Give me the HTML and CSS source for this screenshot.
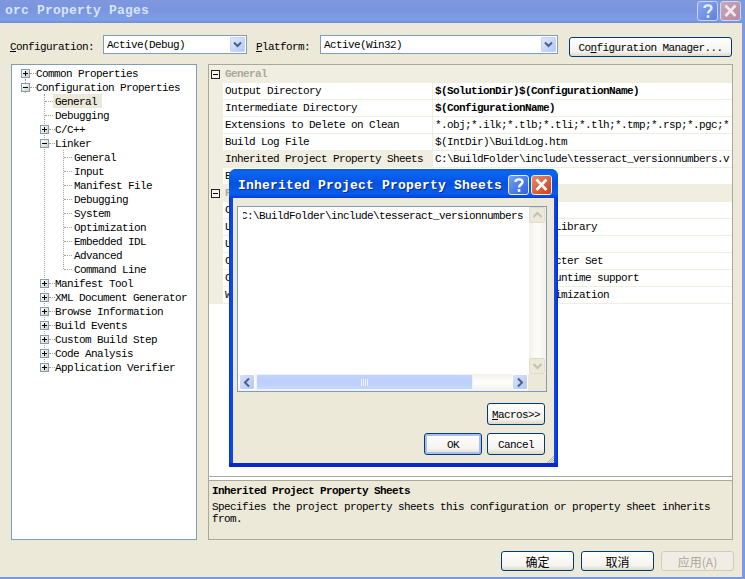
FILE: index.html
```html
<!DOCTYPE html>
<html>
<head>
<meta charset="utf-8">
<title>orc Property Pages</title>
<link rel="stylesheet" href="styles.css">
</head>
<body>
<div class="window">
  <div class="titlebar">
    <span class="title-text">orc Property Pages</span>
    <span class="cap cap-help inactive"><svg width="20" height="20" viewBox="0 0 20 20"><path d="M6.5 7 C6.5 3.5 13.5 3.5 13.5 7 C13.5 9.5 10 9.5 10 12.5" fill="none" stroke="#e8effc" stroke-width="2.4"/><rect x="8.7" y="14.2" width="2.6" height="2.6" fill="#e8effc"/></svg></span>
    <span class="cap cap-close inactive"><svg width="21" height="20" viewBox="0 0 21 20"><path d="M5.5 4.5 L15.5 15 M15.5 4.5 L5.5 15" stroke="#f3e8e8" stroke-width="2.6"/></svg></span>
  </div>

  <div class="config-row">
    <label class="field-label label-config"><u>C</u>onfiguration:</label>
    <div class="combo combo-config"><span>Active(Debug)</span><span class="combo-btn"><svg width="9" height="7" viewBox="0 0 9 7"><path d="M1 1.5 L4.5 5 L8 1.5" fill="none" stroke="#4d6185" stroke-width="2"/></svg></span></div>
    <label class="field-label label-platform"><u>P</u>latform:</label>
    <div class="combo combo-platform"><span>Active(Win32)</span><span class="combo-btn"><svg width="9" height="7" viewBox="0 0 9 7"><path d="M1 1.5 L4.5 5 L8 1.5" fill="none" stroke="#4d6185" stroke-width="2"/></svg></span></div>
    <button class="btn btn-manager">Co<u>n</u>figuration Manager...</button>
  </div>

  <div class="main">
    <div class="tree">
      <i class="vline v-root"></i><i class="vline v-config"></i><i class="vline v-linker"></i>
      <div class="node l0"><i class="exp plus"></i><i class="dash"></i><span>Common Properties</span></div>
      <div class="node l0"><i class="exp minus"></i><i class="dash"></i><span>Configuration Properties</span></div>
      <div class="node l1 leaf"><i class="dash long"></i><span class="selected">General</span></div>
      <div class="node l1 leaf"><i class="dash long"></i><span>Debugging</span></div>
      <div class="node l1"><i class="exp plus"></i><i class="dash"></i><span>C/C++</span></div>
      <div class="node l1"><i class="exp minus"></i><i class="dash"></i><span>Linker</span></div>
      <div class="node l2 leaf"><i class="dash long"></i><span>General</span></div>
      <div class="node l2 leaf"><i class="dash long"></i><span>Input</span></div>
      <div class="node l2 leaf"><i class="dash long"></i><span>Manifest File</span></div>
      <div class="node l2 leaf"><i class="dash long"></i><span>Debugging</span></div>
      <div class="node l2 leaf"><i class="dash long"></i><span>System</span></div>
      <div class="node l2 leaf"><i class="dash long"></i><span>Optimization</span></div>
      <div class="node l2 leaf"><i class="dash long"></i><span>Embedded IDL</span></div>
      <div class="node l2 leaf"><i class="dash long"></i><span>Advanced</span></div>
      <div class="node l2 leaf"><i class="dash long"></i><span>Command Line</span></div>
      <div class="node l1"><i class="exp plus"></i><i class="dash"></i><span>Manifest Tool</span></div>
      <div class="node l1"><i class="exp plus"></i><i class="dash"></i><span>XML Document Generator</span></div>
      <div class="node l1"><i class="exp plus"></i><i class="dash"></i><span>Browse Information</span></div>
      <div class="node l1"><i class="exp plus"></i><i class="dash"></i><span>Build Events</span></div>
      <div class="node l1"><i class="exp plus"></i><i class="dash"></i><span>Custom Build Step</span></div>
      <div class="node l1"><i class="exp plus"></i><i class="dash"></i><span>Code Analysis</span></div>
      <div class="node l1"><i class="exp plus"></i><i class="dash"></i><span>Application Verifier</span></div>
    </div>

    <div class="panel">
      <div class="grid">
        <div class="section"><i class="sec-exp"></i><b>General</b></div>
        <div class="prop"><span class="name">Output Directory</span><span class="val"><b>$(SolutionDir)$(ConfigurationName)</b></span></div>
        <div class="prop"><span class="name">Intermediate Directory</span><span class="val"><b>$(ConfigurationName)</b></span></div>
        <div class="prop"><span class="name">Extensions to Delete on Clean</span><span class="val">*.obj;*.ilk;*.tlb;*.tli;*.tlh;*.tmp;*.rsp;*.pgc;*.pgd;$(TargetPath)</span></div>
        <div class="prop"><span class="name">Build Log File</span><span class="val">$(IntDir)\BuildLog.htm</span></div>
        <div class="prop active"><span class="name">Inherited Project Property Sheets</span><span class="val">C:\BuildFolder\include\tesseract_versionnumbers.vsprops</span></div>
        <div class="prop"><span class="name">Enable Managed Incremental Build</span><span class="val">No</span></div>
        <div class="section second"><i class="sec-exp"></i><b>Project Defaults</b></div>
        <div class="prop"><span class="name">Configuration Type</span><span class="val">Application (.exe)</span></div>
        <div class="prop"><span class="name">Use of MFC</span><span class="val">Use MFC in a Static Library</span></div>
        <div class="prop"><span class="name">Use of ATL</span><span class="val">Not Using ATL</span></div>
        <div class="prop"><span class="name">Character Set</span><span class="val">Use Multi-Byte Character Set</span></div>
        <div class="prop"><span class="name">Common Language Runtime support</span><span class="val">No Common Language Runtime support</span></div>
        <div class="prop"><span class="name">Whole Program Optimization</span><span class="val">No Whole Program Optimization</span></div>
      </div>
      <div class="desc">
        <b>Inherited Project Property Sheets</b>
        <p>Specifies the project property sheets this configuration or property sheet inherits<br>from.</p>
      </div>
    </div>
  </div>

  <div class="footer">
    <button class="btn btn-foot cjk">确定</button>
    <button class="btn btn-foot cjk">取消</button>
    <button class="btn btn-foot cjk disabled">应用(A)</button>
  </div>

  <div class="dialog">
    <div class="dlg-title">
      <span class="dlg-title-text">Inherited Project Property Sheets</span>
      <span class="cap cap-help"><svg width="20" height="20" viewBox="0 0 20 20"><path d="M6.5 7 C6.5 3.5 13.5 3.5 13.5 7 C13.5 9.5 10 9.5 10 12.5" fill="none" stroke="#fff" stroke-width="2.4"/><rect x="8.7" y="14.2" width="2.6" height="2.6" fill="#fff"/></svg></span>
      <span class="cap cap-close"><svg width="21" height="20" viewBox="0 0 21 20"><path d="M5.5 4.5 L15.5 15 M15.5 4.5 L5.5 15" stroke="#fff" stroke-width="2.6"/></svg></span>
    </div>
    <div class="dlg-body">
      <div class="list">
        <div class="list-top">
          <div class="list-text"><i class="caret"></i>C:\BuildFolder\include\tesseract_versionnumbers</div>
          <div class="vscroll">
            <span class="sb-btn off"><svg width="11" height="8" viewBox="0 0 11 8"><path d="M1.5 6 L5.5 2 L9.5 6" fill="none" stroke="#c4c1b2" stroke-width="2"/></svg></span>
            <span class="sb-btn off"><svg width="11" height="8" viewBox="0 0 11 8"><path d="M1.5 2 L5.5 6 L9.5 2" fill="none" stroke="#c4c1b2" stroke-width="2"/></svg></span>
          </div>
        </div>
        <div class="hscroll">
          <span class="sb-btn on"><svg width="8" height="11" viewBox="0 0 8 11"><path d="M6 1.5 L2 5.5 L6 9.5" fill="none" stroke="#4d6185" stroke-width="2"/></svg></span>
          <span class="thumb"><svg width="7" height="7" viewBox="0 0 7 7"><path d="M.5 0V7M2.5 0V7M4.5 0V7M6.5 0V7" stroke="#eef3fe" stroke-width="1"/></svg></span>
          <span class="track"></span>
          <span class="sb-btn on"><svg width="8" height="11" viewBox="0 0 8 11"><path d="M2 1.5 L6 5.5 L2 9.5" fill="none" stroke="#4d6185" stroke-width="2"/></svg></span>
          <span class="corner"></span>
        </div>
      </div>
      <div class="dlg-row macros-row"><button class="btn btn-dlg"><u>M</u>acros&gt;&gt;</button></div>
      <div class="dlg-row ok-row"><button class="btn btn-dlg default">OK</button><button class="btn btn-dlg">Cancel</button></div>
      <svg class="grip" width="8" height="8" viewBox="0 0 8 8"><path d="M8 1L1 8M8 3L3 8M8 5L5 8M8 7L7 8" stroke="#b5b2a3" stroke-width="1"/></svg>
    </div>
  </div>
</div>
</body>
</html>
```
FILE: styles.css
```css
* { box-sizing: border-box; }
html, body { margin: 0; padding: 0; }
body {
  width: 745px;
  height: 579px;
  overflow: hidden;
  font-family: "Liberation Mono", "Noto Sans CJK SC", monospace;
  font-size: 11px;
  letter-spacing: -0.6px;
  color: #000;
  background: #ece9d8;
}
i { display: block; font-style: normal; }
u { text-decoration: underline; }
p { margin: 0; }

.window {
  position: relative;
  width: 745px;
  height: 579px;
  display: flex;
  flex-direction: column;
  background: #ece9d8;
  border-right: 3px solid #7c98e0;
  border-bottom: 2px solid #7c98e0;
  overflow: hidden;
}

/* Title bars */
.titlebar {
  height: 23px;
  flex: none;
  display: flex;
  align-items: center;
  padding: 0 1px 2px 5px;
  gap: 2px;
  background: linear-gradient(180deg, #7f97dd 0%, #7a95e0 45%, #7f9ee6 85%, #6f8fde 100%);
}
.title-text {
  flex: 1;
  color: #d8e3f8;
  font-weight: bold;
  font-size: 13px;
  letter-spacing: 0.2px;
}
.cap {
  flex: none;
  width: 21px;
  height: 20px;
  display: flex;
  align-items: center;
  justify-content: center;
  border: 1px solid #e6ecfb;
  border-radius: 3px;
}
.cap svg { flex: none; }
.cap-help { background: linear-gradient(135deg, #7aa0ef, #2c5fdc); }
.cap-close { background: linear-gradient(135deg, #ea8a66, #cd3f17); }
.cap-help.inactive { background: linear-gradient(135deg, #8aa8ee, #5b80e0); border-color: #c8d6f4; }
.cap-close.inactive { background: linear-gradient(135deg, #c8a8b8, #b08aa8); border-color: #d8d4e8; }

/* Configuration row */
.config-row {
  height: 41px;
  flex: none;
  display: flex;
  align-items: flex-start;
  padding: 12px 0 0 10px;
}
.field-label { padding-top: 6px; }
.label-config { width: 93px; }
.label-platform { width: 64px; margin-left: 9px; }
.combo {
  height: 19px;
  display: flex;
  align-items: center;
  justify-content: space-between;
  padding: 0 1px 0 3px;
  background: #fff;
  border: 1px solid #7f9db9;
  font-size: 11px;
}
.combo-config { width: 144px; }
.combo-platform { width: 238px; }
.combo-btn {
  width: 15px;
  height: 15px;
  display: flex;
  align-items: center;
  justify-content: center;
  background: linear-gradient(135deg, #dfe8fd, #b4c8f6);
  border: 1px solid #c3d2f5;
  border-radius: 1px;
}

.btn {
  font: inherit;
  letter-spacing: inherit;
  color: #000;
  padding: 1px 0 0;
  background: linear-gradient(180deg, #fff 0%, #f4f3ee 75%, #dcd8ca 100%);
  border: 1px solid #003c74;
  border-radius: 3px;
}
.btn-manager { width: 163px; height: 20px; margin: 2px 0 0 11px; }

/* Main area */
.main {
  height: 476px;
  flex: none;
  display: flex;
  gap: 11px;
  padding-left: 11px;
}
.tree {
  position: relative;
  width: 186px;
  height: 476px;
  padding-top: 1px;
  background: #fff;
  border: 1px solid #7f9db9;
}
.vline {
  position: absolute;
  width: 0;
  border-left: 1px dotted #a5a294;
}
.v-root { left: 13px; top: 14px; height: 14px; }
.v-config { left: 32px; top: 29px; height: 274px; }
.v-linker { left: 51px; top: 85px; height: 119px; }

.node {
  position: relative;
  height: 14px;
  display: flex;
  align-items: center;
  white-space: nowrap;
}
.l0 { padding-left: 9px; }
.l1 { padding-left: 28px; }
.l2 { padding-left: 47px; }
.leaf.l1 { padding-left: 33px; }
.leaf.l2 { padding-left: 52px; }
.exp {
  position: relative;
  z-index: 1;
  width: 9px;
  height: 9px;
  flex: none;
  border: 1px solid #7f9db9;
  background: linear-gradient(135deg, #fff, #d0cfc3);
}
.exp::before {
  content: "";
  position: absolute;
  left: 1px;
  top: 3px;
  width: 5px;
  height: 1px;
  background: #000;
}
.plus::after {
  content: "";
  position: absolute;
  left: 3px;
  top: 1px;
  width: 1px;
  height: 5px;
  background: #000;
}
.dash {
  width: 6px;
  flex: none;
  border-top: 1px dotted #a5a294;
}
.dash.long { width: 8px; }
.node span { padding-top: 2px; }
.leaf span { padding: 2px 1px 0 2px; }
.selected { background: #ece9d8; height: 14px; line-height: 12px; width: 49px; }

/* Property grid */
.panel {
  width: 525px;
  height: 476px;
  display: flex;
  flex-direction: column;
  background: #fff;
  border: 1px solid #aca899;
}
.grid {
  height: 412px;
  flex: none;
  border-bottom: 1px solid #aca899;
  overflow: hidden;
}
.section {
  height: 18px;
  display: flex;
  align-items: center;
  background: #f0eee1;
  color: #aca899;
  padding-left: 2px;
}
.section.second { margin-top: -1px; position: relative; }
.sec-exp {
  position: relative;
  width: 9px;
  height: 9px;
  margin-right: 5px;
  border: 1px solid #222;
  background: #f7f6ee;
}
.sec-exp::before {
  content: "";
  position: absolute;
  left: 1px;
  top: 3px;
  width: 5px;
  height: 1px;
  background: #000;
}
.prop {
  height: 17px;
  display: flex;
  align-items: center;
  margin-left: 0;
  border-left: 14px solid #f0eee1;
  border-bottom: 1px solid #f0eee1;
  white-space: nowrap;
}
.name {
  width: 210px;
  height: 16px;
  line-height: 16px;
  flex: none;
  padding-left: 2px;
  border-right: 1px solid #f0eee1;
  overflow: hidden;
}
.val {
  flex: 1;
  min-width: 0;
  height: 16px;
  line-height: 16px;
  margin-right: 2px;
  padding-left: 2px;
  overflow: hidden;
}
.active .name { background: #f0eee1; }
.desc {
  flex: 1;
  margin-top: 3px;
  padding: 4px 3px 0;
  background: #ece9d8;
  border-top: 1px solid #aca899;
  line-height: 12px;
}
.desc b { display: block; margin-bottom: 4px; }

/* Footer */
.footer {
  flex: none;
  display: flex;
  gap: 7px;
  padding: 11px 0 0 501px;
}
.btn-foot {
  width: 73px;
  height: 20px;
  font-size: 12px;
  letter-spacing: 0;
  padding: 0;
}
.cjk { font-family: "Noto Sans CJK SC", "Liberation Mono", sans-serif; }
.btn-foot.disabled {
  color: #aca899;
  background: #f0eee4;
  border-color: #cfccbd;
}

/* Dialog */
.dialog {
  position: absolute;
  left: 229px;
  top: 169px;
  width: 329px;
  height: 298px;
  display: flex;
  flex-direction: column;
  background: linear-gradient(90deg, #0a2fd0 0, #0a4ae8 2px, #0a4ae8 326px, #0a2cc8 329px);
  border-radius: 7px 7px 0 0;
  border-bottom: 4px solid #0a2ac8;
}
.dlg-title {
  height: 29px;
  flex: none;
  display: flex;
  align-items: center;
  gap: 2px;
  padding: 2px 6px 0 9px;
  border-radius: 7px 7px 0 0;
  background: linear-gradient(180deg, #0a5ae8 0%, #0a66f0 12%, #0652e0 50%, #0a5cee 85%, #0440d4 100%);
}
.dlg-title-text {
  flex: 1;
  padding-top: 2px;
  color: #fff;
  font-weight: bold;
  font-size: 13px;
  letter-spacing: 0.2px;
  text-shadow: 1px 1px 0 #0a2a90;
}
.dlg-body {
  position: relative;
  flex: 1;
  margin: 0 4px;
  padding: 8px 0 0 4px;
  background: #ece9d8;
}
.list {
  width: 310px;
  height: 186px;
  display: flex;
  flex-direction: column;
  background: #fff;
  border: 1px solid #7f9db9;
}
.list-top { flex: 1; display: flex; min-height: 0; }
.list-text {
  position: relative;
  flex: 1;
  padding: 3px 0 0 3px;
  white-space: nowrap;
  overflow: hidden;
}
.caret {
  position: absolute;
  left: 3px;
  top: 5px;
  width: 2px;
  height: 9px;
  background: #fff;
}
.vscroll {
  width: 17px;
  flex: none;
  display: flex;
  flex-direction: column;
  justify-content: space-between;
  padding-right: 1px;
  background: linear-gradient(90deg, #f3f1ec, #fdfdfa 50%, #f3f1ec);
}
.hscroll {
  height: 17px;
  flex: none;
  display: flex;
  padding-left: 1px;
  padding-bottom: 1px;
  background: linear-gradient(180deg, #f3f1ec, #fdfdfa 50%, #f3f1ec);
}
.sb-btn {
  width: 16px;
  height: 16px;
  flex: none;
  display: flex;
  align-items: center;
  justify-content: center;
  border-radius: 2px;
  border: 1px solid #fff;
}
.sb-btn.off { background: #ece9d8; border-color: #dedbcc; }
.sb-btn.on { background: linear-gradient(135deg, #d6e1fb, #b4c8f6); }
.thumb {
  width: 217px;
  flex: none;
  margin-left: 1px;
  display: flex;
  align-items: center;
  justify-content: center;
  border-radius: 2px;
  border: 1px solid #eef2fc;
  background: linear-gradient(180deg, #c4d4fa, #bccffa 50%, #c8d7fb);
}
.track { flex: 1; }
.corner { width: 18px; flex: none; background: #ece9d8; margin-bottom: -1px; }
.dlg-row {
  display: flex;
  justify-content: flex-end;
  gap: 5px;
  padding-right: 9px;
}
.macros-row { margin-top: 11px; }
.ok-row { margin-top: 8px; }
.btn-dlg { width: 58px; height: 22px; }
.btn-dlg.default { box-shadow: inset 0 0 0 2px #a9c0ee; }
.grip { position: absolute; right: 0; bottom: 0; }
```
